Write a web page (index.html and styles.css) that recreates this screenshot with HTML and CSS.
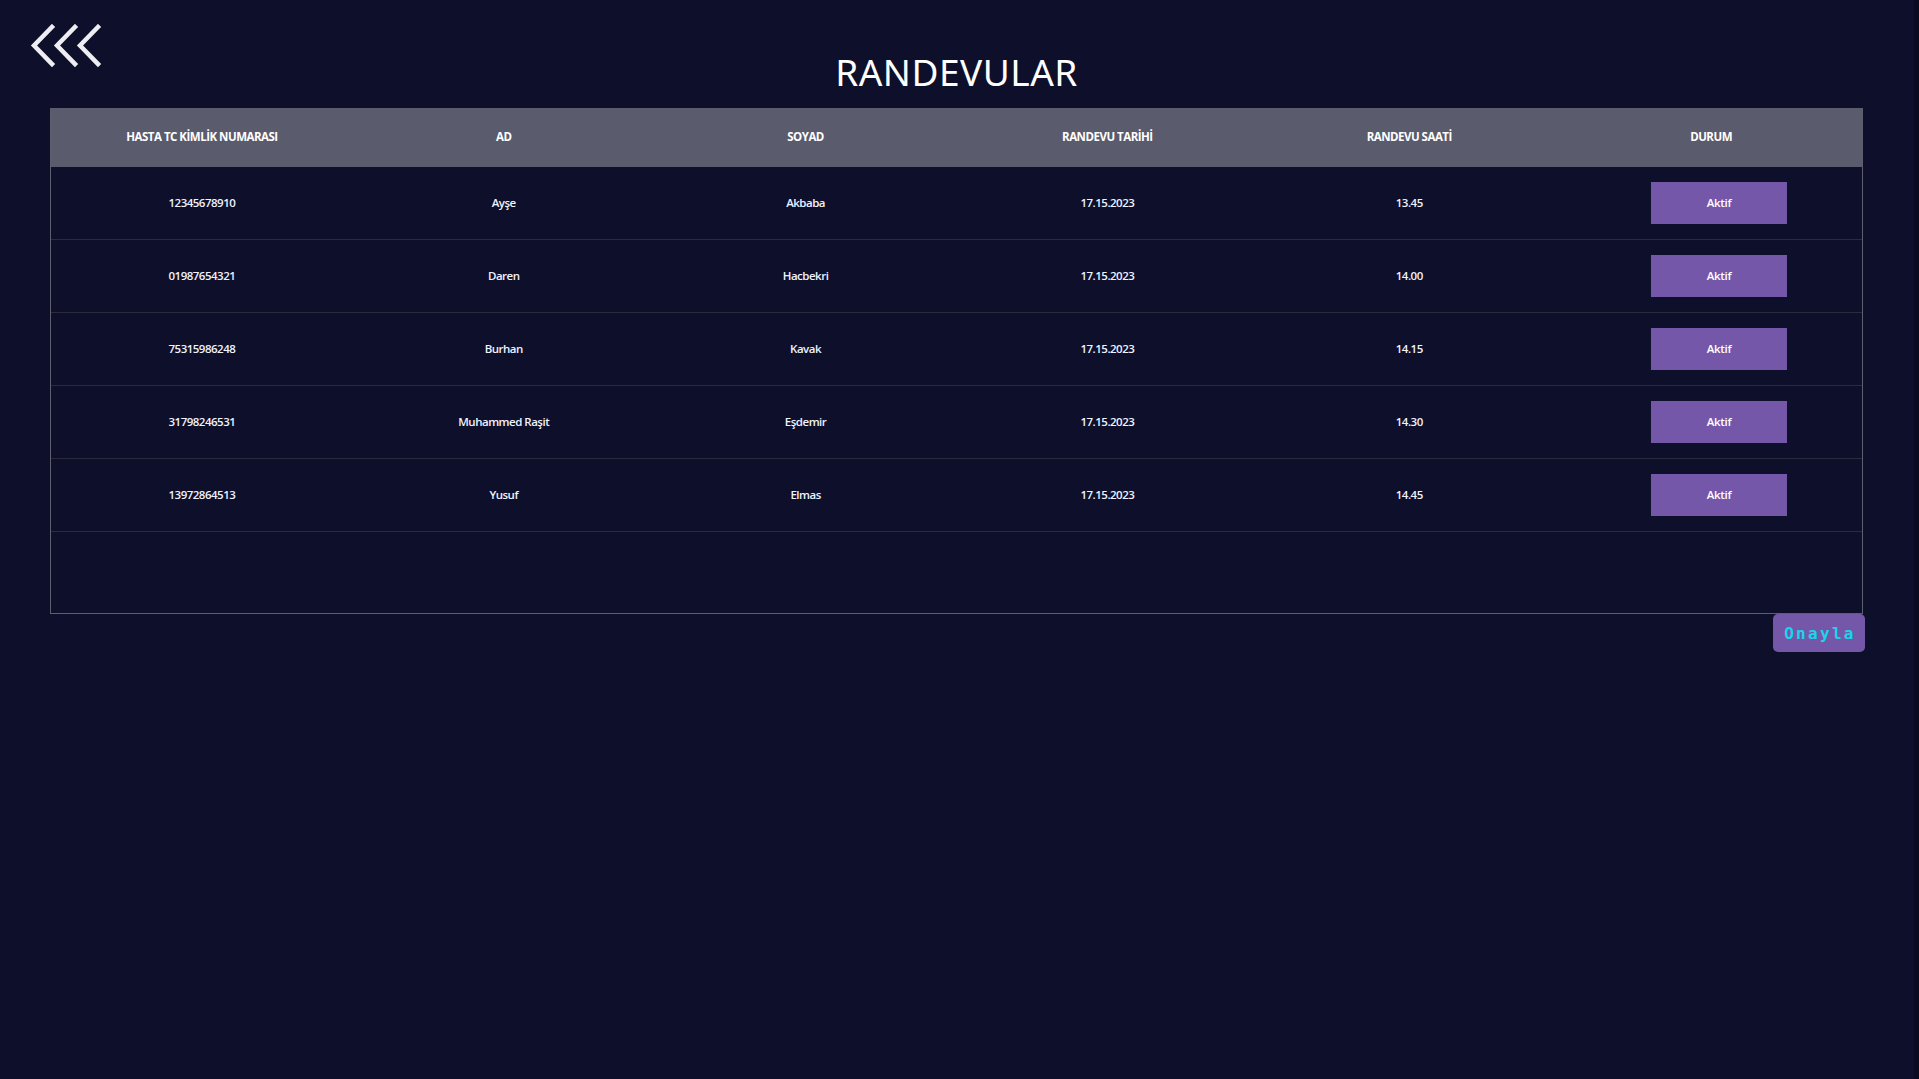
FILE: index.html
```html
<!DOCTYPE html>
<html lang="tr">
<head>
<meta charset="utf-8">
<title>Randevular</title>
<link rel="stylesheet" href="styles.css">
</head>
<body>
<div class="page">
  <header class="topbar">
    <a class="back" href="#" aria-label="Geri">
      <svg width="74" height="44" viewBox="0 0 74 44">
        <g fill="none" stroke="#eeeef2" stroke-width="4.5" stroke-linecap="square" stroke-linejoin="miter">
          <polyline points="22,3 4,21.5 22,40"/>
          <polyline points="45,3 27,21.5 45,40"/>
          <polyline points="68,3 50,21.5 68,40"/>
        </g>
      </svg>
    </a>
    <h1 class="title">RANDEVULAR</h1>
    <div class="spacer"></div>
  </header>

  <section class="table-wrap">
    <table class="grid">
      <thead>
        <tr>
          <th>HASTA TC KİMLİK NUMARASI</th>
          <th>AD</th>
          <th>SOYAD</th>
          <th>RANDEVU TARİHİ</th>
          <th>RANDEVU SAATİ</th>
          <th>DURUM</th>
        </tr>
      </thead>
      <tbody>
        <tr><td>12345678910</td><td>Ayşe</td><td>Akbaba</td><td>17.15.2023</td><td>13.45</td><td><button class="status">Aktif</button></td></tr>
        <tr><td>01987654321</td><td>Daren</td><td>Hacbekri</td><td>17.15.2023</td><td>14.00</td><td><button class="status">Aktif</button></td></tr>
        <tr><td>75315986248</td><td>Burhan</td><td>Kavak</td><td>17.15.2023</td><td>14.15</td><td><button class="status">Aktif</button></td></tr>
        <tr><td>31798246531</td><td>Muhammed Raşit</td><td>Eşdemir</td><td>17.15.2023</td><td>14.30</td><td><button class="status">Aktif</button></td></tr>
        <tr><td>13972864513</td><td>Yusuf</td><td>Elmas</td><td>17.15.2023</td><td>14.45</td><td><button class="status">Aktif</button></td></tr>
      </tbody>
    </table>
  </section>

  <div class="actions">
    <button class="confirm">Onayla</button>
  </div>
</div>
</body>
</html>
```

FILE: styles.css
```css
html, body {
  margin: 0;
  padding: 0;
  background: #0e0f2a;
  height: 100%;
}

body {
  color: #ffffff;
  font-family: "Open Sans", "Noto Sans", "Liberation Sans", sans-serif;
  border-right: 5px solid #0a0b20;
  box-sizing: border-box;
  min-height: 1079px;
}

.page {
  padding: 24px 51px 0 50px;
}

.topbar {
  display: grid;
  grid-template-columns: 1fr auto 1fr;
  align-items: start;
}

.back {
  display: block;
  width: 74px;
  height: 44px;
  margin-left: -20px;
}

.back svg {
  display: block;
}

.title {
  margin: 24px 0 0 0;
  font-family: "Noto Sans", "Open Sans", sans-serif;
  font-weight: 400;
  font-size: 37px;
  line-height: 48px;
  letter-spacing: 0.5px;
  color: #ffffff;
}

.table-wrap {
  margin-top: 12px;
  height: 505px;
  border: 1px solid #5d5e6e;
  border-top: none;
}

.grid {
  width: 100%;
  border-collapse: collapse;
  table-layout: fixed;
  font-family: "Open Sans", "Noto Sans", sans-serif;
  font-stretch: 90%;
  font-weight: 700;
  font-size: 11.5px;
  letter-spacing: -0.5px;
}

.grid thead th {
  background: #5a5b6d;
  color: #ffffff;
  height: 57px;
  padding: 0 0 2px 0;
  font-weight: 700;
  text-align: center;
}

.grid tbody td {
  height: 70px;
  padding: 0 0 2px 0;
  text-align: center;
  color: #eef3ff;
  font-weight: 650;
  border-bottom: 1px solid #2a2b3d;
}

.status {
  display: inline-block;
  width: 136px;
  height: 42px;
  margin: 2px 0 0 16px;
  padding: 0 0 2px 0;
  border: none;
  background: #7557a9;
  color: #ffffff;
  font-family: inherit;
  font-stretch: 90%;
  font-weight: 650;
  font-size: 11.5px;
  letter-spacing: -0.3px;
  cursor: pointer;
}

.actions {
  display: flex;
  justify-content: flex-end;
  margin-right: -2px;
}

.confirm {
  width: 92px;
  height: 38px;
  border: none;
  border-radius: 5px;
  background: #7557a9;
  color: #18d6ea;
  font-family: "DejaVu Sans Mono", "Liberation Mono", monospace;
  font-weight: 700;
  font-size: 16px;
  letter-spacing: 2.3px;
  padding: 0 0 0 2px;
  cursor: pointer;
}
```
